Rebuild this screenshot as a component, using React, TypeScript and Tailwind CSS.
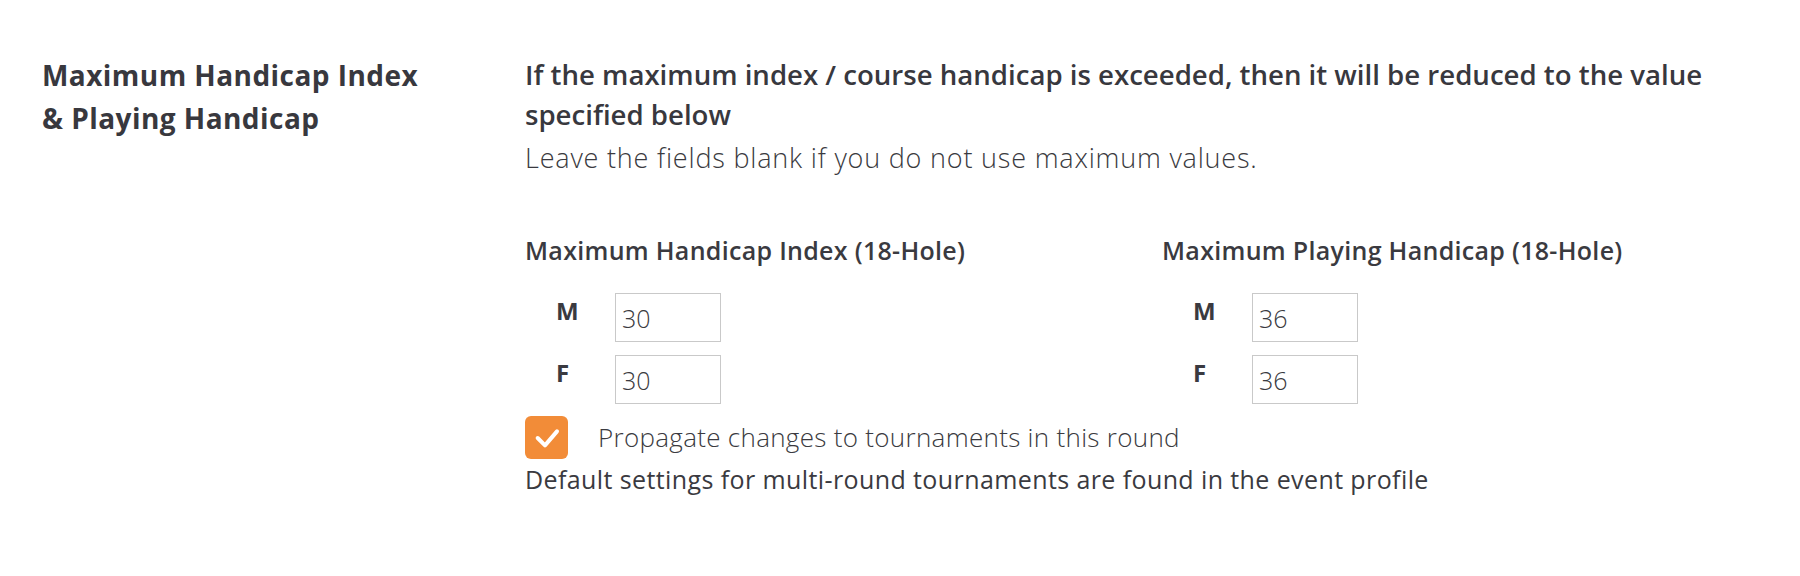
import React from 'react';

const font = { fontFamily: '"Open Sans", Lato, sans-serif' };

const LimitRow: React.FC<{ label: string; value: string }> = ({ label, value }) => (
    <div className="flex items-start">
        <span className="w-[90px] pl-[31px] pt-[3px] text-[24px] font-bold leading-[30px] text-[#3a3a40]">{label}</span>
        <input
            defaultValue={value}
            className="w-[106px] h-[49px] border border-[#c9c9c9] px-[6px] text-[25px] font-light text-[#3a3a40] outline-none"
            style={font}
        />
    </div>
);

const LimitColumn: React.FC<{ title: string; m: string; f: string }> = ({ title, m, f }) => (
    <div className="w-[637px] shrink-0">
        <h3 className="text-[25px] font-semibold tracking-[0.3px] leading-[32px] text-[#3a3a40] mb-[27px]">{title}</h3>
        <div className="flex flex-col gap-[13px]">
            <LimitRow label="M" value={m} />
            <LimitRow label="F" value={f} />
        </div>
    </div>
);

export default function App() {
    return (
        <div className="min-h-screen bg-white" style={font}>
            <section className="flex pl-[42px] pt-[54px]">
                {/* Left label */}
                <div className="w-[483px] shrink-0">
                    <h2 className="text-[28px] font-bold tracking-[0.45px] leading-[43px] text-[#38383e]">
                        Maximum Handicap Index
                        <br />
                        &amp; Playing Handicap
                    </h2>
                </div>

                {/* Settings */}
                <div className="w-[1210px] shrink-0">
                    <p className="text-[27.6px] font-semibold leading-[40px] text-[#38383e]">
                        If the maximum index / course handicap is exceeded, then it will be reduced to the value specified below
                    </p>
                    <p className="mt-[4px] text-[27px] font-light tracking-[0.8px] leading-[40px] text-[#3a3a40]">
                        Leave the fields blank if you do not use maximum values.
                    </p>

                    <div className="flex mt-[56px]">
                        <LimitColumn title="Maximum Handicap Index (18-Hole)" m="30" f="30" />
                        <LimitColumn title="Maximum Playing Handicap (18-Hole)" m="36" f="36" />
                    </div>

                    <label className="flex items-center gap-[30px] mt-[12px]">
                        <span className="w-[43px] h-[43px] rounded-[6px] bg-[#f28c38] flex items-center justify-center">
                            <svg width="32" height="32" viewBox="0 0 24 24" fill="none" stroke="white" strokeWidth="3" strokeLinecap="round" strokeLinejoin="round">
                                <path d="M5 12l5.5 5.5L19.5 7" />
                            </svg>
                        </span>
                        <span className="text-[26px] font-light tracking-[0.3px] text-[#3a3a40]">Propagate changes to tournaments in this round</span>
                    </label>
                    <p className="text-[25px] tracking-[0.4px] leading-[40px] text-[#3a3a40]">
                        Default settings for multi-round tournaments are found in the event profile
                    </p>
                </div>
            </section>
        </div>
    );
}
